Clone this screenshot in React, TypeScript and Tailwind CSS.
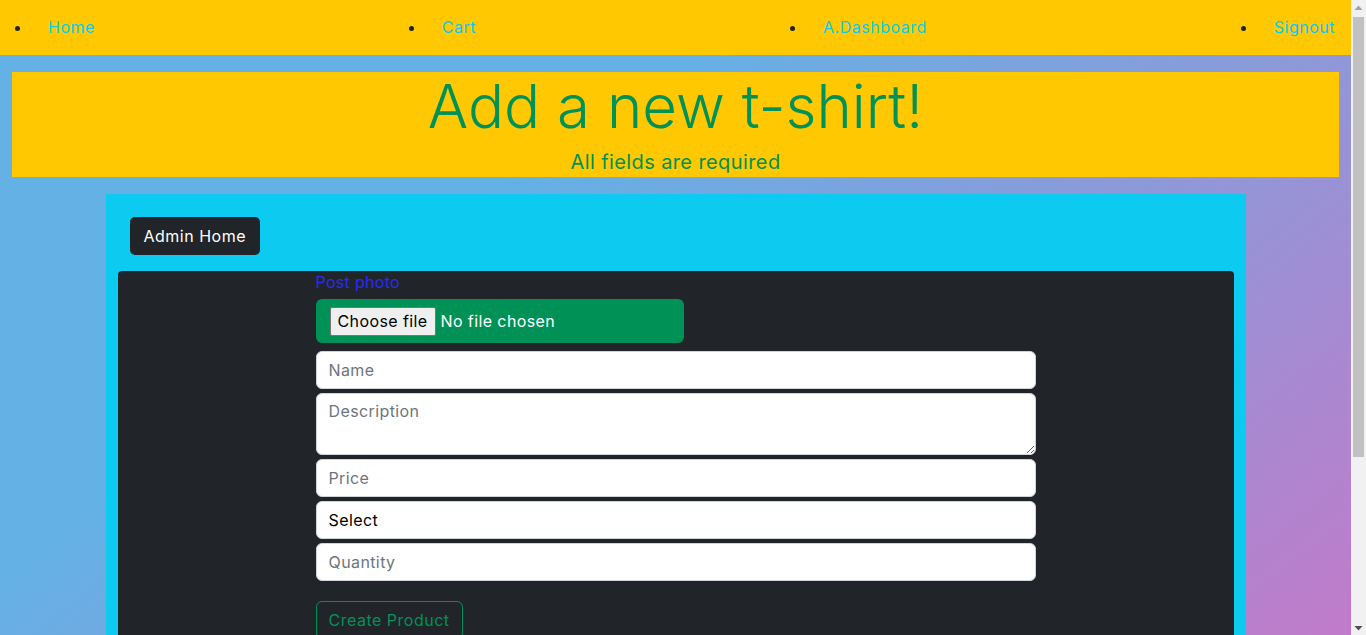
import React from "react";

const links = ["Home", "Cart", "A.Dashboard", "Signout"];

function Scrollbar() {
  return (
    <div className="w-[15px] h-[635px] shrink-0 bg-[#f1f1f1] flex flex-col">
      <div className="h-[15px] flex items-center justify-center">
        <svg width="9" height="6" viewBox="0 0 9 6">
          <polygon points="4.5,0.5 8.5,5 0.5,5" fill="#a3a3a3" />
        </svg>
      </div>
      <div className="mt-[2px] mx-[2px] h-[440px] bg-[#c1c1c1]" />
      <div className="flex-1" />
      <div className="h-[15px] flex items-center justify-center">
        <svg width="9" height="6" viewBox="0 0 9 6">
          <polygon points="0.5,1 8.5,1 4.5,5.5" fill="#505050" />
        </svg>
      </div>
    </div>
  );
}

const inputCls =
  "h-[38px] w-full rounded-md border border-[#ced4da] bg-white px-3 pb-[1px] text-[16px] tracking-[0.4px] placeholder:text-[#6c757d] outline-none";

export default function App() {
  return (
    <div className="h-[635px] overflow-hidden flex font-['Inter','Open_Sans',sans-serif] text-[#212529]">
      <div className="w-[1351px] shrink-0 h-[635px] overflow-hidden bg-[linear-gradient(142deg,#63b1e5_34%,#c17bca_100%)]">
        <nav className="bg-[#ffc800] h-[55px] flex items-center pb-[1px]">
          <ul className="list-disc flex justify-between w-full pl-8 m-0">
            {links.map((l) => (
              <li key={l} className="text-[16px] leading-6">
                <a className="block px-4 py-2 text-[#0dcaf0] tracking-[0.5px]">{l}</a>
              </li>
            ))}
          </ul>
        </nav>

        <div className="mx-3 mt-[17px] h-[105px] bg-[#ffc800] text-center text-[#009157]">
          <h1 className="text-[60px] leading-[60px] font-light pt-[4px]">Add a new t-shirt!</h1>
          <p className="text-[20px] leading-[30px] mt-[11px] tracking-[0.4px]">All fields are required</p>
        </div>

        <div className="w-[1140px] mx-auto mt-[17px] bg-[#0dcaf0] pb-6">
          <div className="pt-[23px] px-6">
            <button className="h-[38px] px-[14px] pb-[1px] rounded-[5px] bg-[#212529] text-white text-[16px] tracking-[0.5px]">
              Admin Home
            </button>
          </div>
          <div className="mx-3 mt-4 rounded bg-[#212529] pb-6">
            <div className="ml-[198px] w-[720px] flex flex-col">
              <label className="text-[16px] leading-[22px] text-[#2b2bf2] tracking-[0.3px] pb-[2px]">Post photo</label>
              <div className="mt-1 w-[368px] h-[44px] rounded-md bg-[#009157] flex items-center pl-[14px] text-[16px] tracking-[0.4px]">
                <span className="h-[29px] px-[7px] flex items-center bg-[#efefef] border border-[#767676] rounded-[2px] text-black">
                  Choose file
                </span>
                <span className="ml-[5px] text-white">No file chosen</span>
              </div>
              <div className="mt-2 flex flex-col gap-1">
                <input className={inputCls} placeholder="Name" />
                <textarea
                  className="h-[62px] w-full rounded-md border border-[#ced4da] bg-white px-3 py-[5px] text-[16px] tracking-[0.4px] placeholder:text-[#6c757d] outline-none block"
                  placeholder="Description"
                />
                <input className={inputCls} placeholder="Price" />
                <div className="h-[38px] w-full rounded-md border border-[#ced4da] bg-white px-3 pb-[1px] text-[16px] tracking-[0.4px] text-black flex items-center">
                  Select
                </div>
                <input className={inputCls} placeholder="Quantity" />
              </div>
              <div className="mt-5">
                <button className="h-[38px] px-3 pb-[1px] rounded-md border border-[#009157] text-[#009157] text-[16px] tracking-[0.5px]">
                  Create Product
                </button>
              </div>
            </div>
          </div>
        </div>
      </div>
      <Scrollbar />
    </div>
  );
}
